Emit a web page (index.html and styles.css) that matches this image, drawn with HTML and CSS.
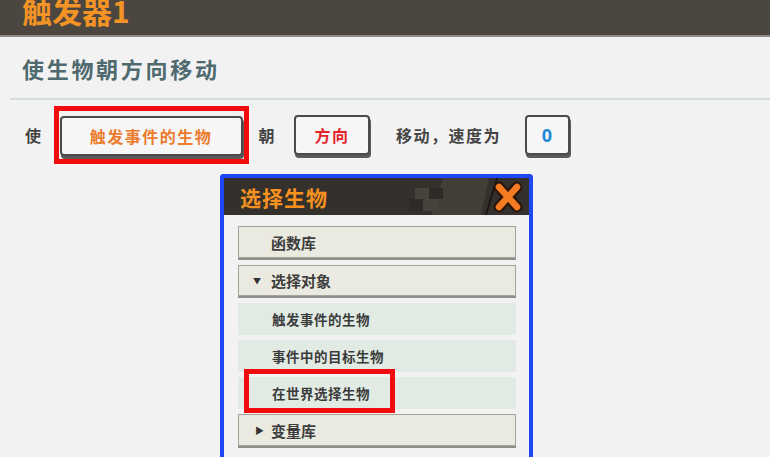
FILE: index.html
```html
<!DOCTYPE html>
<html>
	<head>
		<meta charset="utf-8">
		<title>触发器1</title>
		<link rel="stylesheet" href="styles.css">
	</head>
	<body>
		<div class="topbar"><h1>触发器1</h1></div>
		<h2 class="subtitle">使生物朝方向移动</h2>
		<div class="divider"></div>
		<div class="row">
			<span class="word">使</span>
			<span class="mark-box"><span class="btn orange wide">触发事件的生物</span></span>
			<span class="word w2">朝</span>
			<span class="btn red mid">方向</span>
			<span class="word w3">移动，速度为</span>
			<span class="btn blue small">0</span>
		</div>
		<div class="dialog">
			<div class="dlg-head">
				<span class="dlg-title">选择生物</span>
				<svg class="deco" width="100" height="37" viewBox="0 0 100 37">
					<polygon points="42,0 88,0 80,37 30,37" fill="#423f39"/>
					<rect x="14" y="10" width="14" height="11" fill="#46433d"/>
					<rect x="28" y="10" width="14" height="11" fill="#2e2b27"/>
					<rect x="8" y="21" width="14" height="12" fill="#2e2b27"/>
					<rect x="22" y="21" width="14" height="12" fill="#46433d"/>
					<line x1="96" y1="0" x2="85" y2="37" stroke="#141210" stroke-width="1.5"/>
				</svg>
				<svg class="close" width="30" height="32" viewBox="0 0 30 32">
					<path d="M6 6 L24 26 M24 6 L6 26" stroke="#2a160a" stroke-width="11" stroke-linecap="round"/>
					<path d="M6 6 L24 26 M24 6 L6 26" stroke="#f47b22" stroke-width="6.5" stroke-linecap="round"/>
				</svg>
			</div>
			<div class="dlg-body">
				<div class="item group">函数库</div>
				<div class="item group open"><span class="arrow">&#9660;</span>选择对象</div>
				<div class="item sub">触发事件的生物</div>
				<div class="item sub">事件中的目标生物</div>
				<div class="item sub marked">在世界选择生物<span class="mark-over"></span></div>
				<div class="item group"><span class="arrow side">&#9654;</span>变量库</div>
			</div>
		</div>
	</body>
</html>
```

FILE: styles.css
```css
html{
	overflow:hidden;
}
body{
	margin:0;
	background-color:#f2f2f2;
	font-family:"Noto Sans CJK SC","Noto Sans",sans-serif;
	color:#3c3c3c;
}
.topbar{
	height:35px;
	background-color:#4b4740;
	border-bottom:2px solid #8d8a84;
	overflow:hidden;
}
.topbar h1{
	margin:-10px 0 0 22px;
	font-size:30px;
	line-height:40px;
	color:#f39325;
	font-weight:bold;
}
.subtitle{
	margin:15px 0 0 22px;
	font-size:22px;
	letter-spacing:2.7px;
	line-height:32px;
	color:#4f6a6f;
	font-weight:bold;
}
.divider{
	margin:14px 0 0 10px;
	border-top:2px solid #d3ddd9;
}
.row{
	display:flex;
	align-items:center;
	margin-top:6px;
	padding-left:25px;
}
.word{
	font-size:16px;
	font-weight:bold;
	color:#444;
	letter-spacing:1.5px;
}
.w2{margin-left:10px;}
.w3{margin-left:26px;}
.mark-box{
	margin-left:11px;
	border:5px solid #f00c0c;
	padding:5px 1px 3px 1px;
	display:flex;
}
.btn{
	display:flex;
	align-items:center;
	justify-content:center;
	height:36px;
	background-color:#f6f6f6;
	border:2px solid #4a4a4a;
	border-radius:4px;
	box-shadow:1px 3px 0 #5a5a5a;
	font-size:16px;
	font-weight:bold;
	letter-spacing:1.5px;
}
.wide{width:179px;}
.mid{width:72px;margin-left:18px;}
.small{width:41px;margin-left:24px;}
.orange{color:#ec7b2c;}
.red{color:#e3252b;}
.blue{color:#1d8ad6;font-family:"Open Sans",sans-serif;font-size:18px;}
.dialog{
	margin:10px 0 0 220px;
	width:305px;
	border:4px solid #1f48f2;
	border-bottom:none;
	border-radius:4px 4px 0 0;
	background-color:#f2f2f2;
}
.dlg-head{
	display:flex;
	align-items:center;
	height:37px;
	background-color:#34312c;
	padding-left:16px;
}
.dlg-title{
	font-size:21px;
	font-weight:bold;
	color:#f7911f;
	letter-spacing:1px;
}
.deco{
	margin-left:auto;
}
.close{
	margin:0 6px 0 -8px;
}
.dlg-body{
	display:flex;
	flex-direction:column;
	gap:5px;
	padding:11px 13px 20px 14px;
}
.item{
	position:relative;
	display:flex;
	align-items:center;
	height:32px;
	box-sizing:border-box;
	font-weight:bold;
}
.group{
	background-color:#ebeae0;
	border:1px solid #a3a29b;
	box-shadow:0 2px 0 #8f8e88;
	padding-left:32px;
	font-size:15px;
	color:#3e3e3e;
	margin-bottom:2px;
}
.group.open{
	height:31px;
}
.arrow{
	position:absolute;
	left:14px;
	font-size:8px;
	color:#333;
}
.arrow.side{
	left:16px;
	font-size:9px;
}
.sub{
	background-color:#e1ebe4;
	padding-left:34px;
	font-size:13.5px;
	color:#3b3b3b;
	letter-spacing:0.5px;
}
.mark-over{
	position:absolute;
	left:6px;
	top:-8px;
	width:141px;
	height:34px;
	border:5px solid #f00c0c;
}
```
